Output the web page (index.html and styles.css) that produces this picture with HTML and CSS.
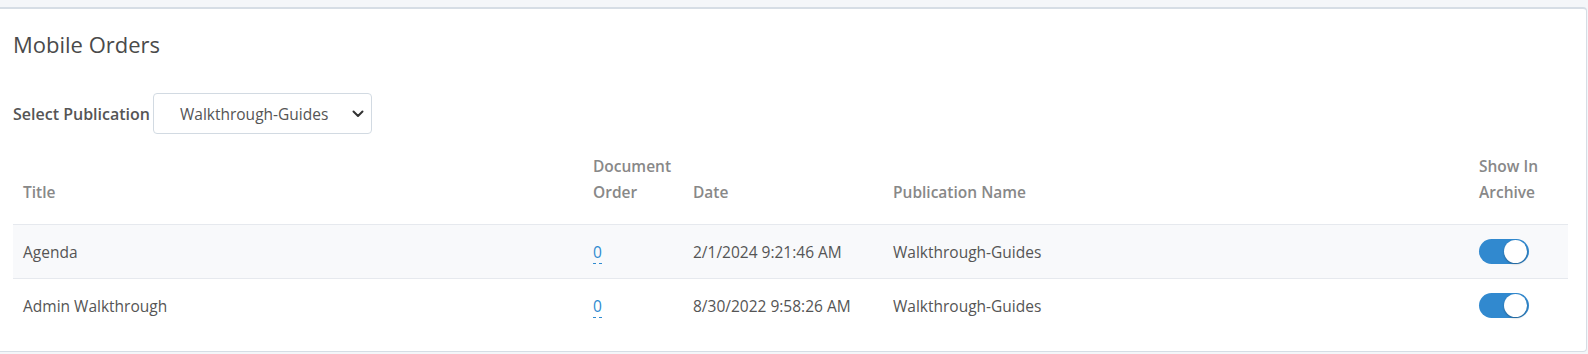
FILE: index.html
```html
<!DOCTYPE html>
<html lang="en">
<head>
    <meta charset="UTF-8">
    <meta name="viewport" content="width=device-width, initial-scale=1.0">
    <title>Mobile Orders</title>
    <link rel="stylesheet" href="styles.css">
</head>
<body>
    <div class="card">
        <h3 class="card-title">Mobile Orders</h3>

        <div class="filter">
            <label>Select Publication</label>
            <div class="select">
                <span>Walkthrough-Guides</span>
                <svg width="12" height="8" viewBox="0 0 12 8">
                    <path d="M1.5 1.5 L6 6 L10.5 1.5" fill="none" stroke="#333" stroke-width="2" stroke-linecap="round" stroke-linejoin="round"/>
                </svg>
            </div>
        </div>

        <table class="orders">
            <colgroup>
                <col class="c-title">
                <col class="c-order">
                <col class="c-date">
                <col class="c-pub">
                <col class="c-archive">
            </colgroup>
            <thead>
                <tr>
                    <th>Title</th>
                    <th>Document<br>Order</th>
                    <th>Date</th>
                    <th>Publication Name</th>
                    <th>Show In<br>Archive</th>
                </tr>
            </thead>
            <tbody>
                <tr class="odd">
                    <td>Agenda</td>
                    <td><a class="edit">0</a></td>
                    <td>2/1/2024 9:21:46 AM</td>
                    <td>Walkthrough-Guides</td>
                    <td><span class="toggle"><span class="knob"></span></span></td>
                </tr>
                <tr>
                    <td>Admin Walkthrough</td>
                    <td><a class="edit">0</a></td>
                    <td>8/30/2022 9:58:26 AM</td>
                    <td>Walkthrough-Guides</td>
                    <td><span class="toggle"><span class="knob"></span></span></td>
                </tr>
            </tbody>
        </table>
    </div>
</body>
</html>
```

FILE: styles.css
```css
body {
    margin: 0;
    padding: 0;
    background: #f4f6f9;
    font-family: 'Open Sans', sans-serif;
    color: #555;
}

.card {
    margin: 7px 1px 1px 0;
    padding: 0 18px 20px 13px;
    background: #fff;
    border: 1px solid #d6dde5;
    border-top: 2px solid #d6dde5;
    border-left: none;
    border-radius: 0 4px 4px 0;
    height: 322px;
    overflow: hidden;
}

.card-title {
    margin: 0;
    padding-top: 20px;
    font-size: 22px;
    font-weight: 400;
    line-height: 30px;
    color: #4a4a4a;
}

.filter {
    display: flex;
    align-items: center;
    margin-top: 34px;
}

.filter label {
    font-size: 16px;
    font-weight: 600;
    color: #555;
    margin-right: 3px;
}

.select {
    display: flex;
    align-items: center;
    justify-content: space-between;
    width: 219px;
    height: 41px;
    box-sizing: border-box;
    padding: 0 7px 0 26px;
    border: 1px solid #d2dae2;
    border-radius: 4px;
    font-size: 15.5px;
    color: #555;
}

.orders {
    width: 1555px;
    margin-top: 19px;
    border-collapse: collapse;
    table-layout: fixed;
    font-size: 15.5px;
}

.c-title { width: 570px; }
.c-order { width: 100px; }
.c-date { width: 200px; }
.c-pub { width: 586px; }
.c-archive { width: 99px; }

.orders th {
    text-align: left;
    vertical-align: bottom;
    font-size: 15.5px;
    font-weight: 600;
    color: #888;
    line-height: 26px;
    padding: 0 10px 19px;
    border-bottom: 1px solid #e6e9ee;
}

.orders td {
    height: 53px;
    padding: 0 10px;
    border-bottom: 1px solid #e6e9ee;
    vertical-align: middle;
}

.orders tbody tr:last-child td {
    border-bottom: none;
}

.orders tr.odd td {
    background: #f8f9fb;
}

.edit {
    color: #2f8bd0;
    text-decoration: none;
    border-bottom: 1px dashed #2f8bd0;
}

.toggle {
    display: flex;
    justify-content: flex-end;
    align-items: center;
    width: 50px;
    height: 25px;
    box-sizing: border-box;
    padding: 1px 2px;
    border-radius: 13px;
    background: #3189cf;
}

.knob {
    width: 23px;
    height: 23px;
    border-radius: 50%;
    background: #fff;
    box-shadow: 0 1px 2px rgba(0, 0, 0, 0.3);
}
```
